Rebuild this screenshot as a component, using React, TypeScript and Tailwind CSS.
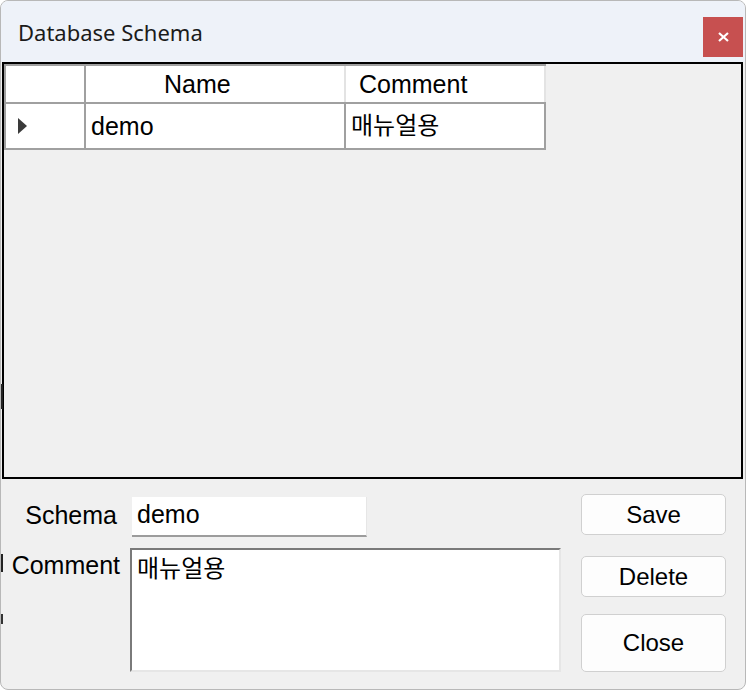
import React from "react";

const body = "font-['Liberation_Sans','Noto_Sans_CJK_KR',sans-serif]";

function RowMarker() {
  return (
    <svg width="10" height="16" viewBox="0 0 10 16" className="block">
      <polygon points="0,0 9,8 0,16" fill="#3a3a3a" />
    </svg>
  );
}

function Btn({ label, h }: { label: string; h: string }) {
  return (
    <button
      type="button"
      className={`w-[145px] ${h} rounded-[5px] border border-[#d0d0d0] bg-[#fdfdfd] text-[24px] text-black leading-none flex items-center justify-center`}
    >
      {label}
    </button>
  );
}

export default function App() {
  return (
    <div className={`relative w-[746px] h-[690px] overflow-hidden bg-[#f0f0f0] border border-[#b8b8b8] rounded-[8px] flex flex-col ${body}`}>
      {/* marks from the window behind */}
      <span className="absolute left-0 top-[383px] w-[2px] h-[25px] bg-[#222]" />
      <span className="absolute left-0 top-[553px] w-[2px] h-[18px] bg-[#222]" />
      <span className="absolute left-0 top-[613px] w-[2px] h-[10px] bg-[#333]" />

      {/* title bar */}
      <div className="h-[61px] bg-[#eef2f9] flex items-start shrink-0">
        <span className="mt-[20px] ml-[17px] text-[22px] leading-none text-[#1b1b1b] font-['Noto_Sans',sans-serif]">Database Schema</span>
        <button type="button" className="ml-auto mt-[16px] mr-[2px] w-[40px] h-[40px] bg-[#c75050] flex items-center justify-center">
          <svg width="11" height="10" viewBox="0 0 11 10">
            <path d="M1 1 L10 9 M10 1 L1 9" stroke="#fff" strokeWidth="2.2" />
          </svg>
        </button>
      </div>

      {/* grid */}
      <div className="ml-[1px] w-[741px] h-[417px] border-2 border-black bg-[#f0f0f0] shrink-0">
        <div className="w-[542px] border-t-2 border-l-2 border-[#a0a0a0]">
          <div className="flex h-[38px] border-b-2 border-[#a0a0a0] bg-white">
            <div className="w-[80px] border-r-2 border-[#a0a0a0]" />
            <div className="w-[260px] border-r-2 border-[#e3e3e3] pl-[78px] flex items-center text-[25px] leading-none">Name</div>
            <div className="w-[200px] border-r-2 border-[#e3e3e3] pl-[13px] flex items-center text-[25px] leading-none">Comment</div>
          </div>
          <div className="flex h-[46px] border-b-2 border-[#a0a0a0] bg-white">
            <div className="w-[80px] border-r-2 border-[#a0a0a0] pl-[12px] flex items-center">
              <RowMarker />
            </div>
            <div className="w-[260px] border-r-2 border-[#a0a0a0] pl-[5px] flex items-center text-[25px] leading-none">demo</div>
            <div className="w-[200px] border-r-2 border-[#a0a0a0] pl-[5px] flex items-center text-[24px] leading-none">매뉴얼용</div>
          </div>
        </div>
      </div>

      {/* form */}
      <div className="flex">
        <div className="w-[560px] flex flex-col">
          <div className="mt-[18px] flex items-center">
            <div className="w-[116px] pb-[3px] text-right text-[25px] leading-none">Schema</div>
            <div className="ml-[15px] w-[235px] h-[40px] bg-white border-r border-[#e6e6e6] border-b-2 border-b-[#9c9c9c] pl-[5px] pb-[3px] flex items-center text-[25px] leading-none">demo</div>
          </div>
          <div className="mt-[11px] flex items-start">
            <div className="w-[119px] pt-[5px] text-right text-[25px] leading-none">Comment</div>
            <div className="ml-[10px] w-[431px] h-[124px] bg-white border-2 border-t-[#7a7a7a] border-l-[#7a7a7a] border-b-[#e6e6e6] border-r-[#e6e6e6] pl-[5px] pt-[7px] text-[24px] leading-none">매뉴얼용</div>
          </div>
        </div>
        <div className="ml-[20px] mt-[15px] flex flex-col">
          <Btn label="Save" h="h-[41px]" />
          <div className="h-[21px]" />
          <Btn label="Delete" h="h-[41px]" />
          <div className="h-[17px]" />
          <Btn label="Close" h="h-[58px]" />
        </div>
      </div>
    </div>
  );
}
